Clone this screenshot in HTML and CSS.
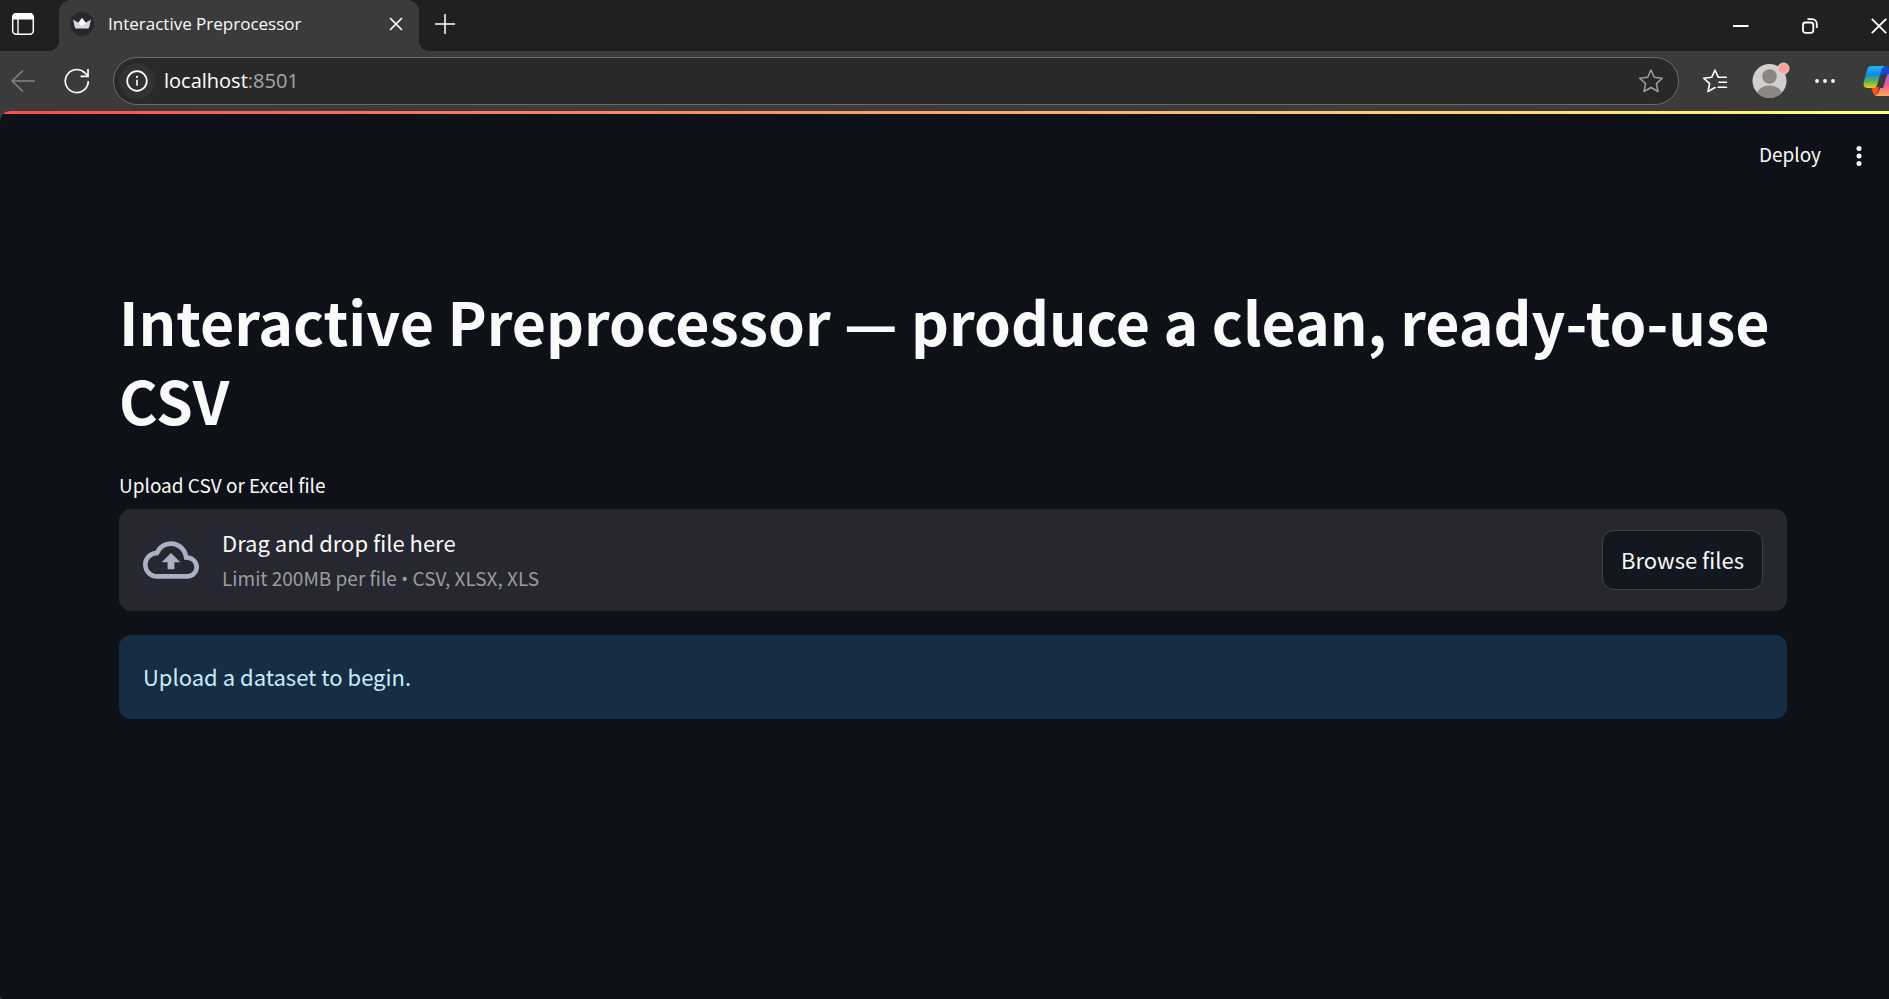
FILE: index.html
```html
<!DOCTYPE html>
<html lang="en">
<head>
<meta charset="utf-8">
<title>Interactive Preprocessor</title>
<link rel="stylesheet" href="styles.css">
</head>
<body>
<div class="window">
  <header class="tabstrip">
    <button class="icon-btn tab-actions" aria-label="Tab actions">
      <svg width="24" height="24" viewBox="0 0 24 24"><rect x="1.7" y="1.7" width="20.600" height="20.600" rx="3.500" fill="none" stroke="#fff" stroke-width="1.500"/><path d="M1.500 7.500V4.500a3.500 3.500 0 0 1 3.500-3.500h14a3.500 3.500 0 0 1 3.500 3.500v3z" fill="#fff"/><path d="M7 7v15" stroke="#fff" stroke-width="1.400"/></svg>
    </button>
    <div class="tab">
      <svg class="favicon" width="24" height="24" viewBox="0 0 24 24"><circle cx="12" cy="12" r="12" fill="#262730"/><path d="M3 7.500l5.300 3.200L12 6l3.700 4.700L21 7.500l-1.800 7.800q-.3 1.200-1.600 1.200H6.400q-1.300 0-1.600-1.200z" fill="#d9d9d9"/><path d="M8.300 10.700L12 6l3.700 4.700L12 14z" fill="#fff"/></svg>
      <span class="tab-title">Interactive Preprocessor</span>
      <button class="icon-btn" aria-label="Close tab"><svg width="14" height="14" viewBox="0 0 14 14"><path d="M1 1l12 12M13 1L1 13" stroke="#fff" stroke-width="1.700"/></svg></button>
    </div>
    <button class="icon-btn new-tab" aria-label="New tab"><svg width="22" height="22" viewBox="0 0 22 22"><path d="M11 1v20M1 11h20" stroke="#fff" stroke-width="1.500"/></svg></button>
    <div class="window-controls">
      <button class="icon-btn" aria-label="Minimize"><svg width="16" height="16" viewBox="0 0 16 16"><path d="M0 8h15.500" stroke="#fff" stroke-width="2"/></svg></button>
      <button class="icon-btn" aria-label="Restore"><svg width="16" height="16" viewBox="0 0 16 16" fill="none" stroke="#fff" stroke-width="1.800"><rect x="1" y="4.500" width="10.300" height="10.300" rx="2.500"/><path d="M5.500 1.200H10a4.800 4.800 0 0 1 4.800 4.800v4"/></svg></button>
      <button class="icon-btn" aria-label="Close"><svg width="16" height="16" viewBox="0 0 16 16"><path d="M.8.8l14.400 14.400M15.200.8L.8 15.200" stroke="#fff" stroke-width="1.800"/></svg></button>
    </div>
  </header>

  <nav class="toolbar" aria-label="Browser toolbar">
    <button class="icon-btn" aria-label="Back"><svg width="24" height="24" viewBox="0 0 24 24" fill="none" stroke="#858585" stroke-width="1.500"><path d="M12 1.500L1 12l11 10.500M1 12h23"/></svg></button>
    <button class="icon-btn" aria-label="Refresh"><svg width="26" height="26" viewBox="0 0 26 26" fill="none" stroke="#fff" stroke-width="1.700"><path d="M24.300 13A11.500 11.500 0 1 1 20.500 4.500L24 8"/><path d="M24 1v7.300h-7.500"/></svg></button>
    <div class="address">
      <button class="icon-btn site-info" aria-label="Site information"><svg width="22" height="22" viewBox="0 0 22 22"><circle cx="11" cy="11" r="9.800" fill="none" stroke="#fff" stroke-width="1.700"/><circle cx="11" cy="6.900" r="1.100" fill="#fff"/><path d="M11 9.700v6" stroke="#fff" stroke-width="1.600"/></svg></button>
      <div class="url"><span class="host">localhost</span>:8501</div>
      <button class="icon-btn" aria-label="Add to favorites"><svg width="26" height="26" viewBox="0 0 26 26" fill="none" stroke="#a0a0a0" stroke-width="1.500" stroke-linejoin="round"><path d="M13 2l3.300 7.300 8 .9-5.900 5.400 1.600 7.900-7-4-7 4 1.600-7.900L1.700 10.200l8-.9z"/></svg></button>
    </div>
    <button class="icon-btn" aria-label="Favorites"><svg width="26" height="26" viewBox="0 0 26 26" fill="none" stroke="#fff" stroke-width="1.600" stroke-linejoin="round" stroke-linecap="round"><path d="M24.300 9.300h-8L13 2 9.700 9.300l-8 .9 5.900 5.400L6 23.500l7-4"/><path d="M17 14.300h7.500M16 19.300h8.500"/></svg></button>
    <button class="icon-btn avatar" aria-label="Profile"><svg width="38" height="38" viewBox="0 0 38 38"><defs><clipPath id="face"><circle cx="17.500" cy="20" r="17"/></clipPath></defs><circle cx="17.500" cy="20" r="17" fill="#d2d0ce"/><g clip-path="url(#face)" fill="#8a8683"><circle cx="17.500" cy="15.500" r="7.300"/><ellipse cx="17.500" cy="35" rx="13" ry="10.500"/></g><circle cx="31.500" cy="7.500" r="5.500" fill="#ff9f9b" stroke="#ddd" stroke-width="1"/></svg></button>
    <button class="icon-btn" aria-label="Settings and more"><svg width="20" height="6" viewBox="0 0 20 6" fill="#fff"><circle cx="2" cy="3" r="1.900"/><circle cx="10" cy="3" r="1.900"/><circle cx="18" cy="3" r="1.900"/></svg></button>
    <button class="icon-btn copilot" aria-label="Copilot"><svg width="36" height="32" viewBox="0 0 36 32"><defs>
      <linearGradient id="cp-left" x1="0" y1="0" x2="0" y2="1"><stop offset="0" stop-color="#18b7f4"/><stop offset=".4" stop-color="#168be0"/><stop offset=".7" stop-color="#5fb34f"/><stop offset="1" stop-color="#f4cf13"/></linearGradient>
      <linearGradient id="cp-right" x1="0" y1="0" x2="0" y2="1"><stop offset="0" stop-color="#a568ee"/><stop offset=".5" stop-color="#ee5b92"/><stop offset="1" stop-color="#ffab59"/></linearGradient></defs>
      <path d="M17 1h5q3 0 4 3l1.500 5h-5q-4 0-6 4z" fill="#1748d3"/>
      <path d="M8 22h8l-2 9q-3 0-4-3z" fill="#f4502c"/>
      <path d="M27 9h4q6 0 4 7l-3 10q-1.500 5-6 5H12q3-1 4-5l5-12q1.500-5 6-5z" fill="url(#cp-right)"/>
      <path d="M8 1h14q-3 1-4 5l-3.500 13q-1 4-5 4H5q-6 0-4-7L4 5q1-4 4-4z" fill="url(#cp-left)"/>
      <path d="M20 10h4l-4 13h-4z" fill="#3b3b3b"/>
    </svg></button>
  </nav>

  <div class="page">
    <div class="decoration"></div>
    <div class="app-bar">
      <button class="deploy">Deploy</button>
      <button class="icon-btn" aria-label="Main menu"><svg width="6" height="20" viewBox="0 0 6 20" fill="#fafafa"><circle cx="3" cy="2.500" r="2.500"/><circle cx="3" cy="10" r="2.500"/><circle cx="3" cy="17.500" r="2.500"/></svg></button>
    </div>
    <main class="content">
      <h1>Interactive Preprocessor — produce a clean, ready-to-use CSV</h1>
      <section class="uploader">
        <label class="upload-label" for="browse">Upload CSV or Excel file</label>
        <div class="dropzone">
          <svg class="cloud" width="56" height="56" viewBox="0 0 24 24" fill="#abb1c5"><path d="M19.350 10.040A7.490 7.490 0 0 0 12 4C9.110 4 6.600 5.640 5.350 8.040A5.994 5.994 0 0 0 0 14c0 3.310 2.690 6 6 6h13c2.760 0 5-2.240 5-5 0-2.640-2.050-4.780-4.650-4.960zM19 18H6c-2.210 0-4-1.790-4-4 0-2.050 1.530-3.760 3.560-3.970l1.070-.11.5-.95A5.469 5.469 0 0 1 12 6c2.620 0 4.880 1.860 5.390 4.430l.3 1.500 1.530.11A2.980 2.980 0 0 1 22 15c0 1.650-1.350 3-3 3zM8 13h2.550v3h2.900v-3H16l-4-4z"/></svg>
          <div class="drop-text">
            <span class="drop-title">Drag and drop file here</span>
            <span class="drop-limit">Limit 200MB per file <span class="bullet">•</span> CSV, XLSX, XLS</span>
          </div>
          <button class="browse" id="browse">Browse files</button>
        </div>
      </section>
      <div class="alert" role="status">Upload a dataset to begin.</div>
    </main>
  </div>
</div>
</body>
</html>
```
FILE: styles.css
```css
* {
  box-sizing: border-box;
}

body {
  margin: 0;
  background: #3b3b3b;
  font-family: "Noto Sans CJK SC", "Open Sans", sans-serif;
  color: #fafafa;
  overflow-x: hidden;
}

button {
  font: inherit;
  color: inherit;
}

.window {
  display: flex;
  flex-direction: column;
  min-height: 100vh;
  overflow: hidden;
}

.icon-btn {
  display: flex;
  flex: none;
  padding: 0;
  border: 0;
  background: none;
}

.tabstrip {
  display: flex;
  height: 51px;
  background: #202020;
  align-items: center;
}

.tab-actions {
  margin: 0 24px 3px 11px;
}

.tab {
  position: relative;
  display: flex;
  align-items: center;
  width: 360px;
  height: 51px;
  padding: 0 16px 3px 11px;
  border-radius: 12px 12px 0 0;
  background: #3b3b3b;
}

.tab::before,
.tab::after {
  content: "";
  position: absolute;
  bottom: 0;
  width: 10px;
  height: 10px;
}

.tab::before {
  right: 100%;
  background: radial-gradient(circle at 0 0, #202020 10px, #3b3b3b 10px);
}

.tab::after {
  left: 100%;
  background: radial-gradient(circle at 100% 0, #202020 10px, #3b3b3b 10px);
}

.tab-title {
  flex: 1;
  margin-left: 14px;
  font-family: "Open Sans", sans-serif;
  font-size: 17px;
  line-height: 24px;
}

.new-tab {
  margin: 0 0 4px 15px;
}

.window-controls {
  display: flex;
  gap: 53px;
  margin-left: auto;
  margin-right: 2px;
}

.toolbar {
  display: flex;
  align-items: center;
  height: 60px;
  padding-left: 11px;
}

.toolbar > .icon-btn:nth-child(2) {
  margin: 0 23px 0 29px;
}

.address {
  display: flex;
  flex: 1;
  align-items: center;
  height: 48px;
  margin-right: 23px;
  padding: 0 14px 0 5px;
  border: 1px solid #6a6a6a;
  border-radius: 24px;
  background: #292929;
}

.site-info {
  align-items: center;
  justify-content: center;
  width: 36px;
  height: 36px;
  border-radius: 50%;
  background: #323232;
}

.url {
  flex: 1;
  margin-left: 9px;
  font-family: "Open Sans", sans-serif;
  font-size: 20px;
  line-height: 28px;
  color: #a6a6a6;
}

.host {
  color: #fff;
}

.avatar {
  margin: 0 25px 2px 24px;
}

.copilot {
  margin: 0 -10px 0 28px;
}

.page {
  flex: 1;
  border-radius: 10px 0 0 4px;
  background: #0e1117;
  overflow: hidden;
}

.decoration {
  height: 3px;
  background: linear-gradient(90deg, #ff4b4b, #fffd80);
}

.app-bar {
  display: flex;
  align-items: center;
  justify-content: flex-end;
  gap: 35px;
  height: 84px;
  padding-right: 27px;
}

.deploy {
  padding: 0 0 4px;
  border: 0;
  background: none;
  font-size: 19px;
  line-height: 32px;
}

.content {
  display: flex;
  flex-direction: column;
  gap: 24px;
  padding: 62px 102px 0 119px;
}

h1 {
  margin: 0;
  padding: 21px 0 6px;
  font-size: 59px;
  font-weight: 700;
  line-height: 79px;
}

.uploader {
  display: flex;
  flex-direction: column;
  gap: 8px;
}

.upload-label {
  font-size: 19px;
  line-height: 32px;
}

.dropzone {
  display: flex;
  align-items: center;
  min-height: 102px;
  padding: 12px 24px;
  border-radius: 12px;
  background: #262730;
}

.cloud {
  flex: none;
}

.drop-text {
  display: flex;
  flex: 1;
  flex-direction: column;
  margin-left: 23px;
}

.drop-title {
  font-size: 22px;
  line-height: 36px;
}

.drop-limit {
  font-size: 19px;
  line-height: 36px;
  color: #9c9c9f;
}

.bullet {
  font-family: "Open Sans", sans-serif;
  line-height: 1;
}

.browse {
  height: 60px;
  padding: 0 18px 2px;
  border: 1px solid #41444c;
  border-radius: 12px;
  background: #131720;
  font-size: 22px;
  line-height: 36px;
}

.alert {
  padding: 23px 24px 25px;
  border-radius: 12px;
  background: #172d43;
  font-size: 22px;
  line-height: 36px;
  color: #c7ebff;
}
```
